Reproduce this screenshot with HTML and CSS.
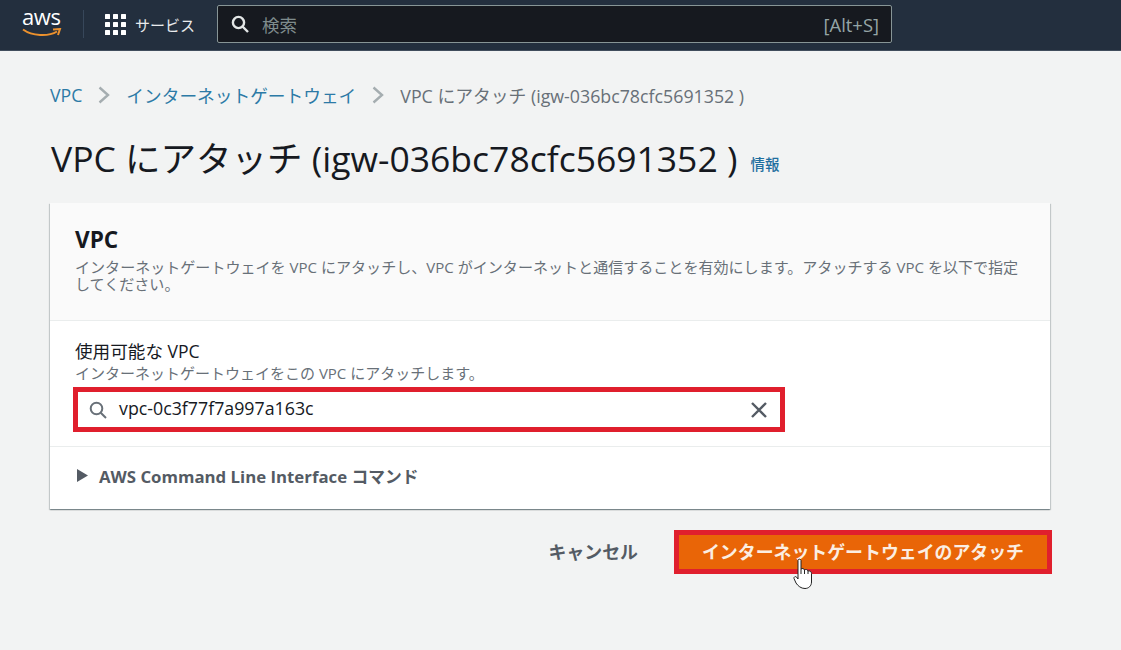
FILE: index.html
```html
<!DOCTYPE html>
<html lang="ja">
<head>
<meta charset="utf-8">
<title>VPC にアタッチ</title>
<link rel="stylesheet" href="styles.css">
</head>
<body>
<header class="topbar">
  <div class="logo">
    <span class="logo-text">aws</span>
    <svg class="logo-smile" width="40" height="10" viewBox="0 0 40 10"><path d="M1 1.5C10 8 26 9 35 3.5" fill="none" stroke="#ec912d" stroke-width="2"/><path d="M31 1.5L38 1L36 7" fill="none" stroke="#ec912d" stroke-width="2"/></svg>
  </div>
  <div class="divider"></div>
  <div class="services">
    <svg class="grid-icon" width="21" height="21" viewBox="0 0 21 21" fill="#fff"><rect width="5" height="5" rx=".5"/><rect x="8" width="5" height="5" rx=".5"/><rect x="16" width="5" height="5" rx=".5"/><rect y="8" width="5" height="5" rx=".5"/><rect x="8" y="8" width="5" height="5" rx=".5"/><rect x="16" y="8" width="5" height="5" rx=".5"/><rect y="16" width="5" height="5" rx=".5"/><rect x="8" y="16" width="5" height="5" rx=".5"/><rect x="16" y="16" width="5" height="5" rx=".5"/></svg>
    <span>サービス</span>
  </div>
  <div class="top-search">
    <svg width="18" height="18" viewBox="0 0 18 18" fill="none" stroke="#e3e6e6" stroke-width="2.4"><circle cx="7.5" cy="7.5" r="5.6"/><path d="M11.5 11.5L17 17"/></svg>
    <span class="top-search-text">検索</span>
    <span class="shortcut">[Alt+S]</span>
  </div>
</header>

<main class="page">
  <nav class="crumbs">
    <a>VPC</a>
    <svg class="chev" width="12" height="18" viewBox="0 0 12 18" fill="none" stroke="#a5adb0" stroke-width="2.4"><path d="M1.5 1.5L10 9L1.5 16.5"/></svg>
    <a>インターネットゲートウェイ</a>
    <svg class="chev" width="12" height="18" viewBox="0 0 12 18" fill="none" stroke="#a5adb0" stroke-width="2.4"><path d="M1.5 1.5L10 9L1.5 16.5"/></svg>
    <span class="crumb-current">VPC にアタッチ (igw-036bc78cfc5691352 )</span>
  </nav>

  <div class="title-row">
    <h1>VPC にアタッチ (igw-036bc78cfc5691352 )</h1>
    <a class="info">情報</a>
  </div>

  <section class="card">
    <div class="card-head">
      <h2>VPC</h2>
      <p>インターネットゲートウェイを VPC にアタッチし、VPC がインターネットと通信することを有効にします。アタッチする VPC を以下で指定してください。</p>
    </div>
    <div class="card-body">
      <div class="label">使用可能な VPC</div>
      <div class="hint">インターネットゲートウェイをこの VPC にアタッチします。</div>
      <div class="vpc-input">
        <svg width="18" height="18" viewBox="0 0 18 18" fill="none" stroke="#687078" stroke-width="2"><circle cx="7.5" cy="7.5" r="5.8"/><path d="M11.7 11.7L17 17"/></svg>
        <span class="vpc-value">vpc-0c3f77f7a997a163c</span>
        <svg width="18" height="18" viewBox="0 0 18 18" fill="none" stroke="#545b64" stroke-width="2.4"><path d="M2 2L16 16M16 2L2 16"/></svg>
      </div>
    </div>
    <div class="card-foot">
      <svg width="11" height="13" viewBox="0 0 11 13" fill="#545b64"><path d="M0 0L11 6.5L0 13Z"/></svg>
      <span>AWS Command Line Interface コマンド</span>
    </div>
  </section>

  <div class="actions">
    <button class="cancel">キャンセル</button>
    <button class="attach">インターネットゲートウェイのアタッチ</button>
  </div>
  <svg class="cursor" width="20" height="32" viewBox="0 0 20 32"><path d="M5 2.5C5 .8 8 .8 8 2.500V11C9.500 10 11 10.500 11.500 12C13 11 14.500 11.500 15 13C16.500 12.500 18.500 13.500 18.500 15.500V24C18.500 28 15.500 30.500 12 30.500C8 30.500 5 28 3 25L1 20.500C.500 19 2.500 18 3.500 19L5 21Z" fill="#fff" stroke="#222" stroke-width="1"/><path d="M8 11V16M11.500 12V16M15 13V16" stroke="#222" stroke-width="1"/></svg>
</main>
</body>
</html>
```
FILE: styles.css
```css
* { box-sizing: border-box; }
html, body { margin: 0; padding: 0; height: 100%; }
body {
  width: 1121px;
  height: 650px;
  overflow: hidden;
  background: #f2f3f3;
  color: #16191f;
  font-family: "Open Sans", "Noto Sans CJK JP", sans-serif;
}
.topbar {
  height: 51px;
  background: #232f3e;
  border-bottom: 1px solid #414d5c;
  display: flex;
  align-items: center;
  padding: 0 0 2px 22px;
}
.logo { width: 41px; display: flex; flex-direction: column; align-items: flex-start; }
.logo-text { color: #fff; font: 22px/16px "Open Sans", sans-serif; letter-spacing: -.4px; height: 19px; margin-top: -2px; }
.logo-smile { display: block; margin-top: 1px; }
.divider { width: 1px; height: 28px; background: #37475a; margin-left: 20px; }
.services { display: flex; align-items: center; gap: 9px; margin-left: 21px; color: #e9ebed; font-size: 15px; width: 112px; flex: none; }
.grid-icon { flex: none; }
.top-search {
  width: 675px;
  height: 38px;
  background: #16191f;
  border: 1px solid #879596;
  border-radius: 2px;
  display: flex;
  align-items: center;
  padding: 0 12px 0 13px;
  color: #7f8c8d;
  font-size: 17.500px;
}
.top-search-text { margin-left: 13px; flex: 1; }
.shortcut { color: #95a5a6; font-size: 18.400px; }
.page { padding: 32px 71px 0 50px; position: relative; }
.crumbs { display: flex; align-items: center; height: 24px; font-size: 17.700px; }
.crumbs a { color: #2c7aa6; }
.chev { margin: 0 16px; flex: none; }
.crumb-current { color: #687078; font-size: 17.800px; }
.title-row { display: flex; align-items: flex-start; gap: 13px; margin-top: 26px; height: 50px; }
h1 { margin: 0 0 0 1px; font-size: 35.500px; line-height: 50px; font-weight: 400; white-space: nowrap; }
.info { color: #1f6f9f; font-size: 14.500px; line-height: 20px; font-weight: 500; margin-top: 22px; }
.card { margin-top: 20px; width: 1000px; background: #fff; box-shadow: 0 1px 1px 0 rgba(0,28,36,.3), 1px 1px 1px 0 rgba(0,28,36,.15), -1px 1px 1px 0 rgba(0,28,36,.15); }
.card-head { height: 118px; background: #fafafa; border-bottom: 1px solid #eaeded; padding: 23px 25px 0; }
h2 { margin: 0; font-size: 22.600px; line-height: 27px; font-weight: 700; color: #16191f; }
.card-head p { margin: 6px 0 0; font-size: 15.050px; line-height: 17px; color: #687078; }
.card-body { height: 126px; border-bottom: 1px solid #eaeded; padding: 19px 25px 0; position: relative; }
.label { font-size: 17.600px; line-height: 22px; margin-bottom: 2px; color: #16191f; }
.hint { font-size: 15px; line-height: 18px; color: #687078; }
.vpc-input {
  width: 712px;
  height: 45px;
  margin: 5px 0 0 -2px;
  border: 5px solid #e01f2d;
  display: flex;
  align-items: center;
  padding: 0 12px 0 11px;
  background: #fff;
}
.vpc-value { flex: 1; margin: 0 0 3px 12px; font-size: 17.800px; color: #16191f; }
.card-foot { height: 62px; display: flex; align-items: center; gap: 11px; padding: 0 27px 5px; font-size: 16.800px; font-weight: 700; color: #545b64; }
.actions { display: flex; justify-content: flex-end; align-items: center; width: 1002px; margin-top: 21px; }
button { font-family: inherit; font-weight: 700; font-size: 17.900px; border: none; }
.cancel { background: none; color: #545b64; margin-right: 36px; padding: 0 0 2px; }
.attach { width: 378px; height: 44px; background: #e96507; color: #fbeee2; border: 5px solid #e01f2d; padding: 0 0 3px; }
.cursor { position: absolute; left: 793px; top: 507px; }
```
